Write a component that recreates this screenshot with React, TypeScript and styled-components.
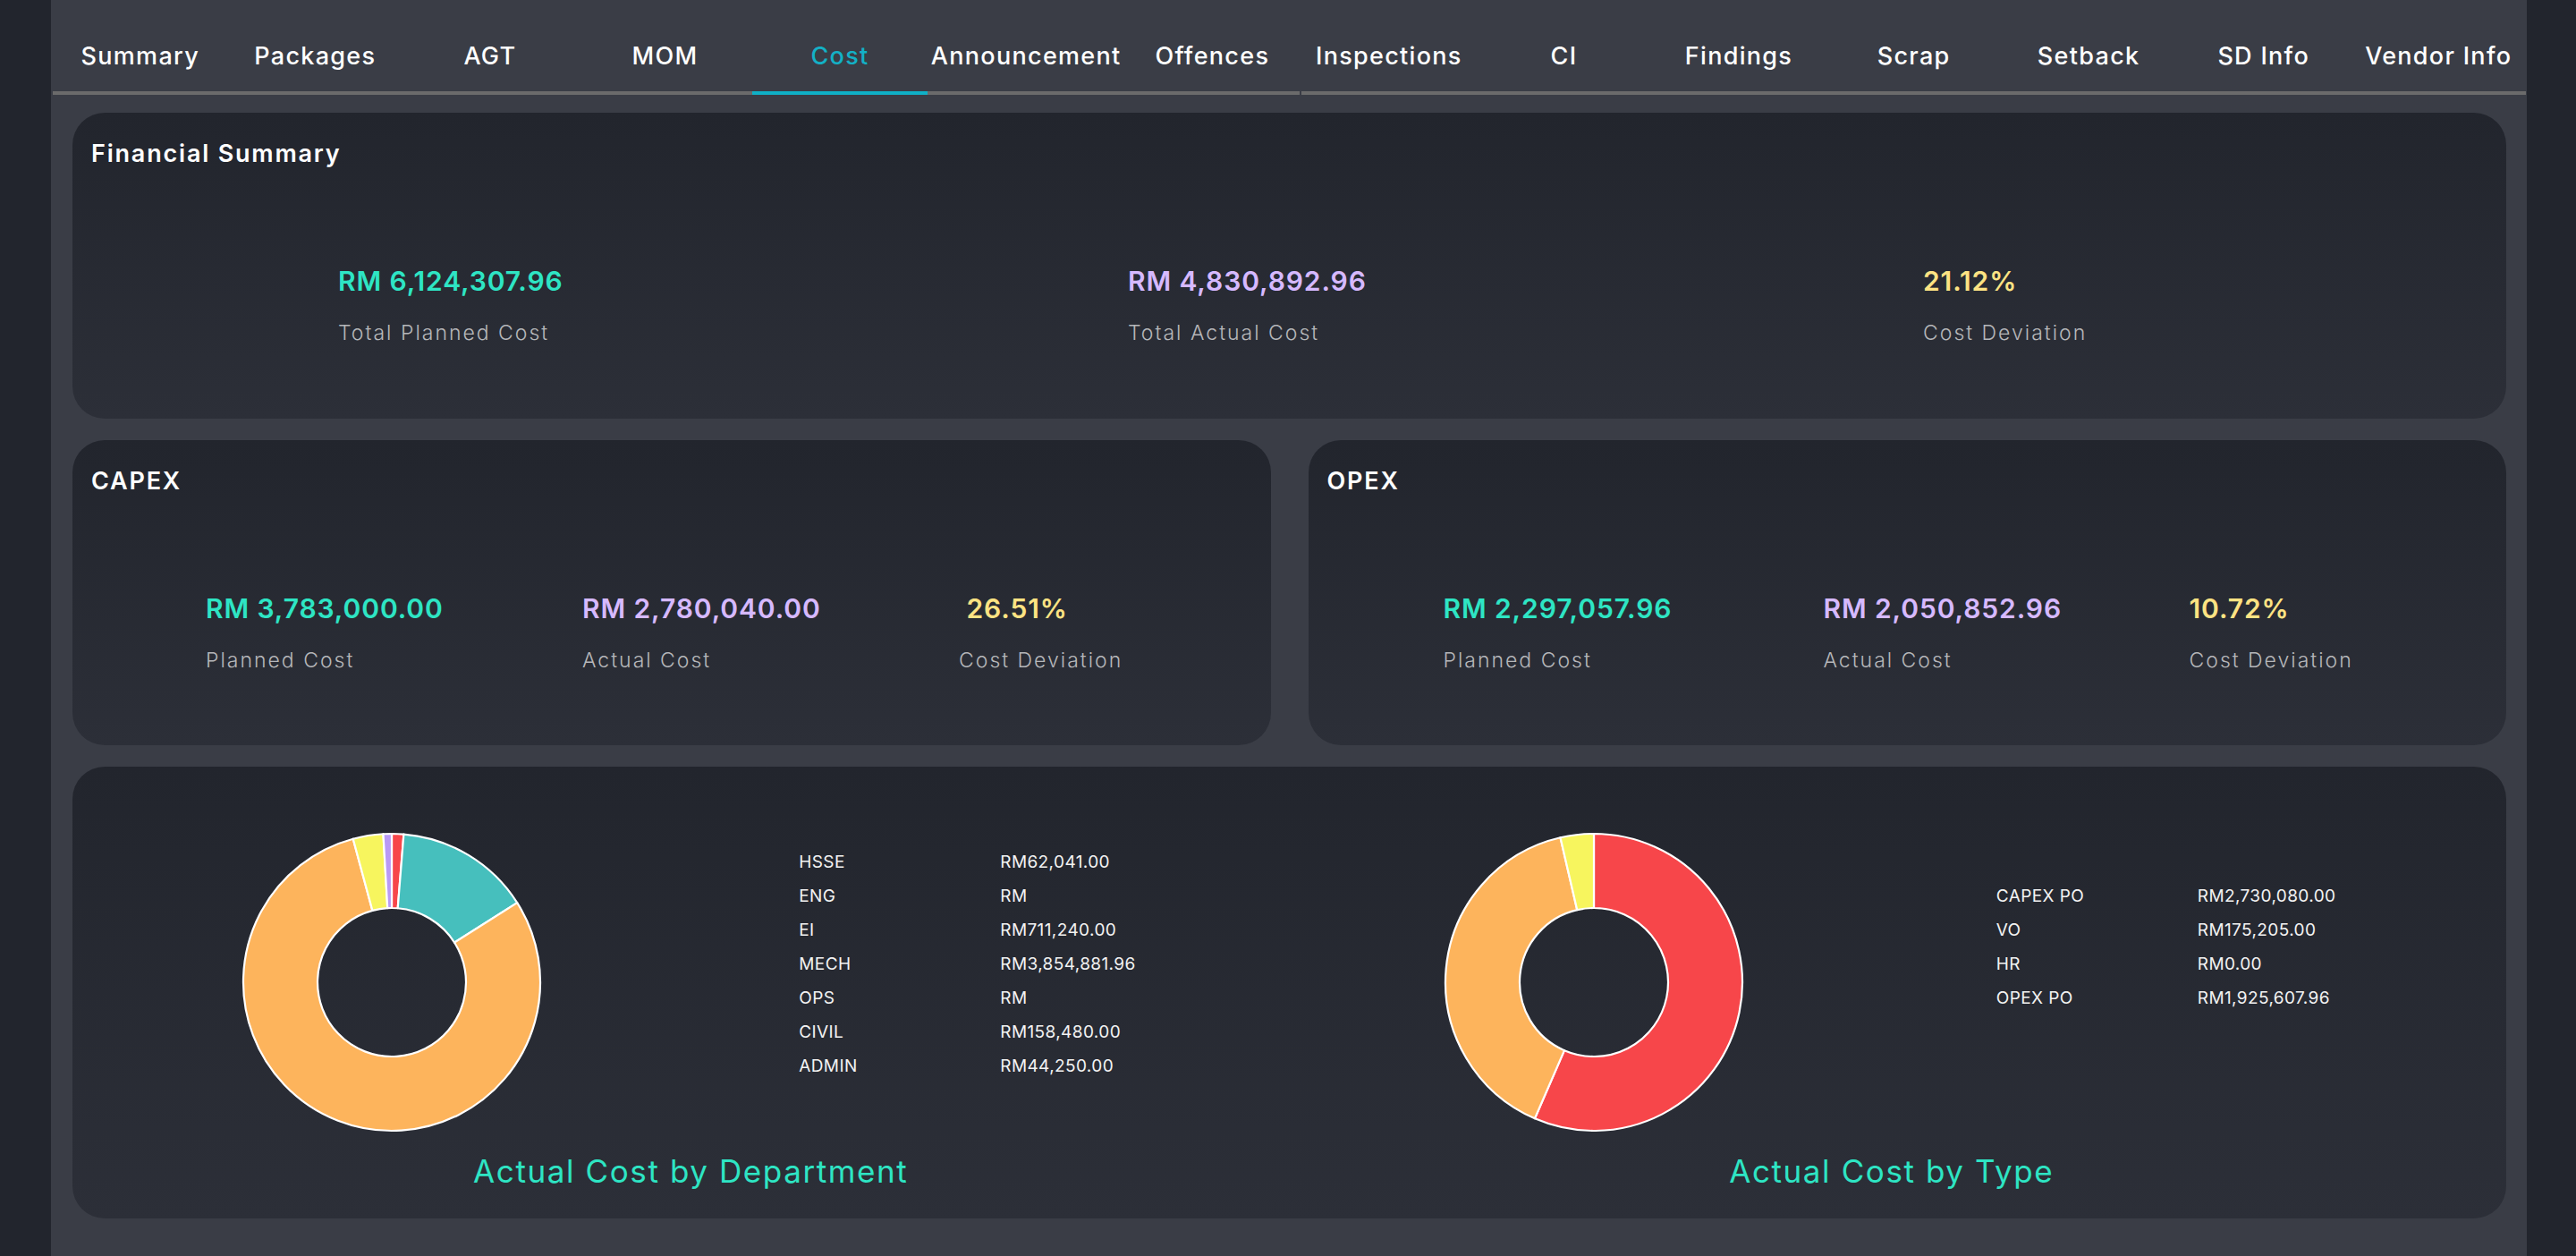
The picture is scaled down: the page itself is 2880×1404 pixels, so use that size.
import React from "react";
import styled, { createGlobalStyle } from "styled-components";

const GlobalStyle = createGlobalStyle`
  html, body { margin: 0; padding: 0; background: #22252d; }
  body { font-family: Inter, "Open Sans", sans-serif; -webkit-font-smoothing: antialiased; }
  * { box-sizing: border-box; }
`;

const Shell = styled.div`
  display: grid;
  grid-template-columns: 57px 1fr 55px;
  min-height: 100vh;
  background: #22252d;
`;

const Side = styled.aside`
  background: #22252d;
`;

const Main = styled.main`
  background: #3a3d46;
  padding: 0 1px 0 2px;
`;

const TabBar = styled.nav`
  display: flex;
`;

const Tab = styled.div<{ $active?: boolean; $split?: boolean }>`
  flex: 1 1 0;
  min-width: max-content;
  height: 106px;
  padding: 22px 4px 0;
  display: flex;
  align-items: center;
  justify-content: center;
  border-bottom: 4px solid ${(p) => (p.$active ? "#0fb0c6" : "#6b6b6b")};
  color: ${(p) => (p.$active ? "#13b1c6" : "#ffffff")};
  font-size: 27px;
  font-weight: 500;
  letter-spacing: 1.3px;
  white-space: nowrap;
  margin-left: ${(p) => (p.$split ? "2px" : "0")};
`;

const Content = styled.div`
  display: flex;
  flex-direction: column;
  gap: 24px;
  padding: 20px 22px 0 22px;
`;

const Row = styled.div`
  display: grid;
  grid-template-columns: 1fr 1fr;
  gap: 42px;
`;

const Card = styled.section<{ $h: number }>`
  height: ${(p) => p.$h}px;
  border-radius: 36px;
  background: linear-gradient(180deg, #22252d 0%, #2c2f38 100%);
  padding: 30px 21px 0;
  display: flex;
  flex-direction: column;
`;

const CardTitle = styled.h2`
  margin: 0;
  font-size: 27px;
  line-height: 32px;
  font-weight: 600;
  letter-spacing: 1.8px;
  color: #ffffff;
`;

const Stats = styled.div<{ $cols: string; $lead: number }>`
  display: grid;
  grid-template-columns: ${(p) => p.$cols};
  padding-left: ${(p) => p.$lead}px;
  margin-top: 108px;
`;

const Stat = styled.div`
  display: flex;
  flex-direction: column;
  gap: 26px;
`;

const Value = styled.div<{ $tone: "teal" | "purple" | "yellow" }>`
  font-size: 30px;
  line-height: 36px;
  font-weight: 600;
  letter-spacing: 0.9px;
  white-space: pre;
  color: ${(p) =>
    p.$tone === "teal" ? "#2ee5c4" : p.$tone === "purple" ? "#d6b9ff" : "#fde383"};
`;

const Label = styled.div`
  font-size: 23px;
  line-height: 28px;
  font-weight: 300;
  letter-spacing: 2px;
  color: #b6b7ba;
  white-space: nowrap;
`;

const ChartCard = styled.section`
  height: 505px;
  border-radius: 36px;
  background: linear-gradient(180deg, #22252d 0%, #2c2f38 100%);
  padding: 0 22px;
  display: grid;
  grid-template-columns: 1fr 1fr;
`;

const ChartColumn = styled.div<{ $shift?: number }>`
  display: flex;
  flex-direction: column;
  padding-left: ${(p) => p.$shift ?? 0}px;
`;

const ChartRow = styled.div`
  display: grid;
  grid-template-columns: 1fr 1fr;
`;

const DonutCell = styled.div`
  display: flex;
  justify-content: center;
  padding-top: 72px;
`;

const Legend = styled.div<{ $top: number; $left: number }>`
  display: grid;
  grid-template-columns: 225px auto;
  align-content: start;
  padding-top: ${(p) => p.$top}px;
  padding-left: ${(p) => p.$left}px;
  font-size: 19px;
  line-height: 38px;
  font-weight: 400;
  letter-spacing: 0.4px;
  color: #f3f3f3;
`;

const LegendCell = styled.span`
  white-space: nowrap;
`;

const ChartTitle = styled.h3`
  margin: 22px 0 0;
  text-align: center;
  font-size: 35px;
  line-height: 40px;
  font-weight: 400;
  letter-spacing: 1.6px;
  color: #2ee5c4;
`;

const DonutSvg = styled.svg`
  display: block;
  overflow: visible;
`;

type Slice = { value: number; color: string };

function arcPath(cx: number, cy: number, r0: number, r1: number, a0: number, a1: number) {
  const pt = (r: number, a: number) => [cx + r * Math.sin(a), cy - r * Math.cos(a)];
  const large = a1 - a0 > Math.PI ? 1 : 0;
  const [x0, y0] = pt(r1, a0);
  const [x1, y1] = pt(r1, a1);
  const [x2, y2] = pt(r0, a1);
  const [x3, y3] = pt(r0, a0);
  return `M${x0} ${y0} A${r1} ${r1} 0 ${large} 1 ${x1} ${y1} L${x2} ${y2} A${r0} ${r0} 0 ${large} 0 ${x3} ${y3} Z`;
}

function Donut({ slices }: { slices: Slice[] }) {
  const size = 338;
  const c = size / 2;
  const r1 = 166;
  const r0 = 83;
  const total = slices.reduce((s, x) => s + x.value, 0);
  let acc = 0;
  return (
    <DonutSvg width={size} height={size} viewBox={`0 0 ${size} ${size}`}>
      {slices.map((s, i) => {
        const a0 = (acc / total) * Math.PI * 2;
        acc += s.value;
        const a1 = (acc / total) * Math.PI * 2;
        if (s.value <= 0) return null;
        return (
          <path
            key={i}
            d={arcPath(c, c, r0, r1, a0, a1)}
            fill={s.color}
            stroke="#ffffff"
            strokeWidth={2.2}
            strokeLinejoin="round"
          />
        );
      })}
    </DonutSvg>
  );
}

const RED = "#f7464a";
const TEAL = "#46bfbd";
const ORANGE = "#fdb45c";
const YELLOW = "#f7f55e";
const PURPLE = "#b99af5";

const tabs = [
  "Summary",
  "Packages",
  "AGT",
  "MOM",
  "Cost",
  "Announcement",
  "Offences",
  "Inspections",
  "CI",
  "Findings",
  "Scrap",
  "Setback",
  "SD Info",
  "Vendor Info",
];

const deptRows: [string, string, number, string][] = [
  ["HSSE", "RM62,041.00", 62041, RED],
  ["ENG", "RM", 0, "#949fb1"],
  ["EI", "RM711,240.00", 711240, TEAL],
  ["MECH", "RM3,854,881.96", 3854881.96, ORANGE],
  ["OPS", "RM", 0, "#4d5360"],
  ["CIVIL", "RM158,480.00", 158480, YELLOW],
  ["ADMIN", "RM44,250.00", 44250, PURPLE],
];

const typeRows: [string, string][] = [
  ["CAPEX PO", "RM2,730,080.00"],
  ["VO", "RM175,205.00"],
  ["HR", "RM0.00"],
  ["OPEX PO", "RM1,925,607.96"],
];

const typeSlices: Slice[] = [
  { value: 2730080, color: RED },
  { value: 1925607.96, color: ORANGE },
  { value: 175205, color: YELLOW },
];

export default function App() {
  return (
    <>
      <GlobalStyle />
      <Shell>
        <Side />
        <Main>
          <TabBar>
            {tabs.map((t) => (
              <Tab key={t} $active={t === "Cost"} $split={t === "Inspections"}>
                {t}
              </Tab>
            ))}
          </TabBar>
          <Content>
            <Card $h={342}>
              <CardTitle>Financial Summary</CardTitle>
              <Stats $cols="883px 889px auto" $lead={276}>
                <Stat>
                  <Value $tone="teal">RM 6,124,307.96</Value>
                  <Label>Total Planned Cost</Label>
                </Stat>
                <Stat>
                  <Value $tone="purple">RM 4,830,892.96</Value>
                  <Label>Total Actual Cost</Label>
                </Stat>
                <Stat>
                  <Value $tone="yellow">21.12%</Value>
                  <Label>Cost Deviation</Label>
                </Stat>
              </Stats>
            </Card>
            <Row>
              <Card $h={341}>
                <CardTitle>CAPEX</CardTitle>
                <Stats $cols="421px 421px auto" $lead={128}>
                  <Stat>
                    <Value $tone="teal">RM 3,783,000.00</Value>
                    <Label>Planned Cost</Label>
                  </Stat>
                  <Stat>
                    <Value $tone="purple">RM 2,780,040.00</Value>
                    <Label>Actual Cost</Label>
                  </Stat>
                  <Stat>
                    <Value $tone="yellow"> 26.51%</Value>
                    <Label>Cost Deviation</Label>
                  </Stat>
                </Stats>
              </Card>
              <Card $h={341}>
                <CardTitle>OPEX</CardTitle>
                <Stats $cols="425px 409px auto" $lead={130}>
                  <Stat>
                    <Value $tone="teal">RM 2,297,057.96</Value>
                    <Label>Planned Cost</Label>
                  </Stat>
                  <Stat>
                    <Value $tone="purple">RM 2,050,852.96</Value>
                    <Label>Actual Cost</Label>
                  </Stat>
                  <Stat>
                    <Value $tone="yellow">10.72%</Value>
                    <Label>Cost Deviation</Label>
                  </Stat>
                </Stats>
              </Card>
            </Row>
            <ChartCard>
              <ChartColumn>
                <ChartRow>
                  <DonutCell>
                    <Donut slices={deptRows.map((r) => ({ value: r[2], color: r[3] }))} />
                  </DonutCell>
                  <Legend $top={88} $left={121}>
                    {deptRows.map((r) => (
                      <React.Fragment key={r[0]}>
                        <LegendCell>{r[0]}</LegendCell>
                        <LegendCell>{r[1]}</LegendCell>
                      </React.Fragment>
                    ))}
                  </Legend>
                </ChartRow>
                <ChartTitle>Actual Cost by Department</ChartTitle>
              </ChartColumn>
              <ChartColumn $shift={8}>
                <ChartRow>
                  <DonutCell>
                    <Donut slices={typeSlices} />
                  </DonutCell>
                  <Legend $top={126} $left={117}>
                    {typeRows.map((r) => (
                      <React.Fragment key={r[0]}>
                        <LegendCell>{r[0]}</LegendCell>
                        <LegendCell>{r[1]}</LegendCell>
                      </React.Fragment>
                    ))}
                  </Legend>
                </ChartRow>
                <ChartTitle>Actual Cost by Type</ChartTitle>
              </ChartColumn>
            </ChartCard>
          </Content>
        </Main>
        <Side />
      </Shell>
    </>
  );
}
